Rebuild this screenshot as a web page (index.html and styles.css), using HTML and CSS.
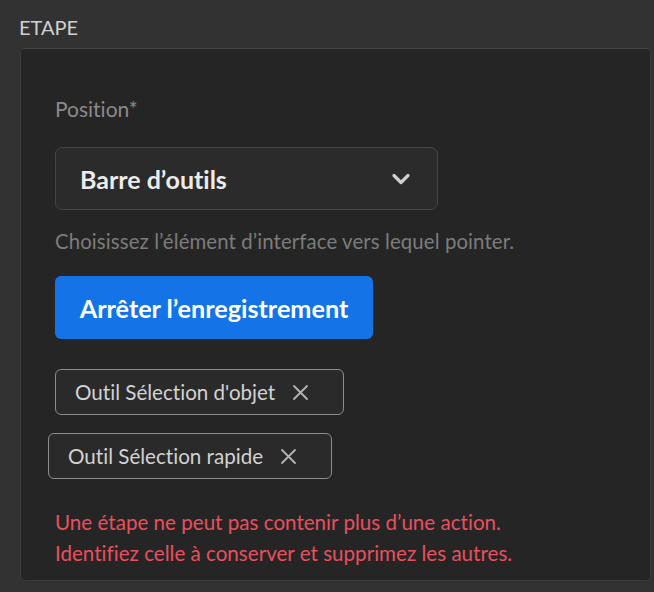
FILE: index.html
```html
<!DOCTYPE html>
<html lang="fr">
<head>
<meta charset="utf-8">
<link rel="stylesheet" href="styles.css">
</head>
<body>
<div class="panel">
  <div class="section-title">ETAPE</div>
  <div class="card">
    <div class="field-label">Position*</div>
    <div class="select">
      <span class="select-value">Barre d’outils</span>
      <svg class="chevron" width="20" height="14" viewBox="0 0 20 14"><path d="M3 3.5 L10 10.5 L17 3.5" fill="none" stroke="#cfcfcf" stroke-width="3.2" stroke-linecap="round" stroke-linejoin="round"/></svg>
    </div>
    <div class="help">Choisissez l’élément d’interface vers lequel pointer.</div>
    <button class="btn-primary">Arrêter l’enregistrement</button>
    <div class="chips">
      <div class="chip"><span class="chip-text">Outil Sélection d'objet</span><svg class="chip-x" width="17" height="17" viewBox="0 0 17 17"><path d="M2 2 L15 15 M15 2 L2 15" stroke="#b4b4b4" stroke-width="1.8" stroke-linecap="round"/></svg></div>
      <div class="chip chip-shift"><span class="chip-text">Outil Sélection rapide</span><svg class="chip-x" width="17" height="17" viewBox="0 0 17 17"><path d="M2 2 L15 15 M15 2 L2 15" stroke="#b4b4b4" stroke-width="1.8" stroke-linecap="round"/></svg></div>
    </div>
    <div class="error">Une étape ne peut pas contenir plus d’une action.<br>Identifiez celle à conserver et supprimez les autres.</div>
  </div>
</div>
</body>
</html>
```

FILE: styles.css
```css
html, body {
  margin: 0;
  padding: 0;
  background: #323232;
}
body {
  font-family: "Lato", "Open Sans", sans-serif;
  font-variant-ligatures: none;
  width: 654px;
  height: 592px;
  overflow: hidden;
}
.panel {
  padding: 14px 3px 0 19px;
}
.section-title {
  color: #d0d0d0;
  font-size: 20px;
  line-height: 26px;
  height: 34px;
}
.card {
  margin-left: 1px;
  background: #252525;
  border: 1px solid #3a3a3a;
  border-top-color: #424242;
  border-radius: 5px;
  height: 533px;
  box-sizing: border-box;
  padding: 47px 0 0 34px;
}
.field-label {
  color: #8a8a8a;
  font-size: 21px;
  line-height: 26px;
  height: 26px;
}
.select {
  margin-top: 25px;
  width: 383px;
  height: 63px;
  box-sizing: border-box;
  background: #2b2b2b;
  border: 1.5px solid #454545;
  border-radius: 7px;
  display: flex;
  align-items: center;
  justify-content: space-between;
  padding: 0 26px 0 24px;
}
.select-value {
  color: #ececec;
  font-weight: 700;
  font-size: 25px;
}
.chevron {
  display: block;
}
.help {
  margin-top: 19px;
  color: #7c7c7c;
  font-size: 20.4px;
  line-height: 24px;
  letter-spacing: 0.1px;
}
.btn-primary {
  display: block;
  margin-top: 23px;
  width: 318px;
  height: 63px;
  border: none;
  border-radius: 6px;
  background: #1473e6;
  color: #ffffff;
  font-family: inherit;
  font-variant-ligatures: none;
  font-weight: 700;
  font-size: 25.2px;
  padding: 0;
  text-align: center;
}
.chips {
  margin-top: 30px;
  display: flex;
  flex-direction: column;
  align-items: flex-start;
  gap: 18px;
}
.chip {
  height: 46px;
  box-sizing: border-box;
  border: 1.5px solid #8c8c8c;
  border-radius: 6px;
  background: #2a2a2a;
  display: flex;
  align-items: center;
  padding: 0 34px 0 19px;
  gap: 17px;
}
.chip-shift {
  margin-left: -7px;
}
.chip-text {
  color: #d2d2d2;
  font-size: 20.6px;
}
.chip-x {
  display: block;
}
.error {
  margin-top: 28px;
  color: #e8505e;
  font-size: 20.6px;
  line-height: 31px;
}
```
